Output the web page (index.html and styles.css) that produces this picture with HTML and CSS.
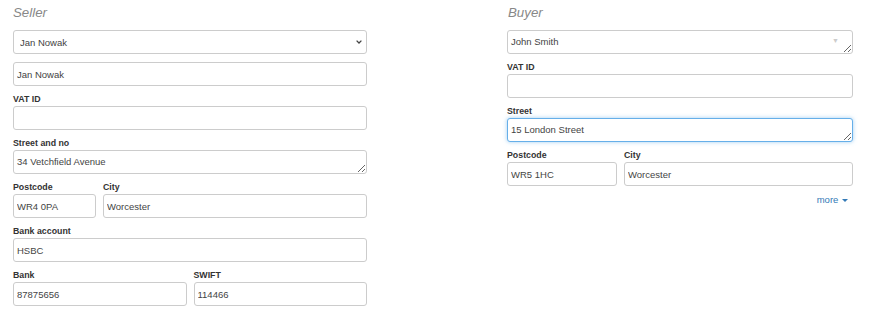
FILE: index.html
```html
<!DOCTYPE html>
<html lang="en">

<head>
    <meta charset="UTF-8">
    <meta name="viewport" content="width=device-width, initial-scale=1.0">
    <title>Invoice parties</title>
    <link rel="stylesheet" href="styles.css">
</head>

<body>
    <div class="parties">

        <!-- Seller -->
        <div class="party seller">
            <h4 class="party-title">Seller</h4>
            <div class="group combo">
                <select class="field select-field">
                    <option>Jan Nowak</option>
                </select>
                <svg class="select-chevron" width="6" height="4" viewBox="0 0 6 4">
                    <path d="M0.6 0.6 L3 3 L5.4 0.6" fill="none" stroke="#444" stroke-width="1.3"/>
                </svg>
            </div>
            <div class="group">
                <input type="text" class="field" value="Jan Nowak">
            </div>
            <div class="group">
                <label class="field-label">VAT ID</label>
                <input type="text" class="field" value="">
            </div>
            <div class="group">
                <label class="field-label">Street and no</label>
                <textarea class="field area" rows="1">34 Vetchfield Avenue</textarea>
            </div>
            <div class="group split split-postcode">
                <div>
                    <label class="field-label">Postcode</label>
                    <input type="text" class="field" value="WR4 0PA">
                </div>
                <div>
                    <label class="field-label">City</label>
                    <input type="text" class="field" value="Worcester">
                </div>
            </div>
            <div class="group">
                <label class="field-label">Bank account</label>
                <input type="text" class="field" value="HSBC">
            </div>
            <div class="group split split-half">
                <div>
                    <label class="field-label">Bank</label>
                    <input type="text" class="field" value="87875656">
                </div>
                <div>
                    <label class="field-label">SWIFT</label>
                    <input type="text" class="field" value="114466">
                </div>
            </div>
        </div>

        <!-- Buyer -->
        <div class="party buyer">
            <h4 class="party-title">Buyer</h4>
            <div class="group combo">
                <textarea class="field area" rows="1">John Smith</textarea>
                <span class="combo-arrow">&#9660;</span>
            </div>
            <div class="group">
                <label class="field-label">VAT ID</label>
                <input type="text" class="field" value="">
            </div>
            <div class="group">
                <label class="field-label">Street</label>
                <textarea class="field area focused" rows="1">15 London Street</textarea>
            </div>
            <div class="group split split-third">
                <div>
                    <label class="field-label">Postcode</label>
                    <input type="text" class="field" value="WR5 1HC">
                </div>
                <div>
                    <label class="field-label">City</label>
                    <input type="text" class="field" value="Worcester">
                </div>
            </div>
            <div class="more-row">
                <a href="#" class="more-link">more <span class="caret"></span></a>
            </div>
        </div>

    </div>
</body>

</html>
```

FILE: styles.css
```css
body {
    margin: 0;
    background: #fff;
    font-family: "Liberation Sans", Arial, sans-serif;
    color: #333;
}

/* dvije kolone */
.parties {
    display: grid;
    grid-template-columns: 354px 346px;
    column-gap: 140px;
    padding-left: 13px;
}

.party-title {
    margin: 0 0 8px 0;
    padding-top: 4px;
    height: 18px;
    line-height: 18px;
    font-size: 13.3px;
    font-weight: normal;
    font-style: italic;
    color: #888;
}

.buyer .party-title {
    padding-left: 1px;
}

.group {
    margin-bottom: 8px;
}

.field-label {
    display: block;
    height: 12px;
    line-height: 10px;
    font-size: 8.8px;
    font-weight: bold;
    color: #333;
}

.field {
    display: block;
    box-sizing: border-box;
    width: 100%;
    height: 24px;
    margin: 0;
    padding: 0 3px;
    border: 1px solid #ccc;
    border-radius: 3px;
    background: #fff;
    font-family: "Liberation Sans", Arial, sans-serif;
    font-size: 9.5px;
    color: #444;
    outline: none;
}

.select-field {
    -webkit-appearance: none;
    appearance: none;
    padding-left: 6px;
    padding-right: 16px;
}

.area {
    line-height: 12px;
    padding-top: 5px;
    padding-bottom: 0;
    overflow: hidden;
}

.area.focused {
    border-color: #66afe9;
    box-shadow: 0 0 4px rgba(102, 175, 233, .6);
}

/* combo sa strelicom */
.combo {
    position: relative;
}

.select-chevron {
    position: absolute;
    top: 10px;
    right: 5px;
    pointer-events: none;
}

.combo-arrow {
    position: absolute;
    top: 7px;
    right: 14px;
    font-size: 7px;
    color: #ccc;
}

.split {
    display: grid;
    column-gap: 7px;
}

.split-postcode {
    grid-template-columns: 83px 1fr;
}

.split-half {
    grid-template-columns: 1fr 1fr;
}

.split-third {
    grid-template-columns: 110px 1fr;
}

.more-row {
    display: flex;
    justify-content: flex-end;
    padding-right: 5px;
    margin-top: 4px;
}

.more-link {
    font-size: 9.5px;
    color: #337ab7;
    text-decoration: none;
}

.caret {
    display: inline-block;
    width: 0;
    height: 0;
    margin-left: 1px;
    vertical-align: middle;
    border-top: 3px solid #337ab7;
    border-left: 3px solid transparent;
    border-right: 3px solid transparent;
}
```
